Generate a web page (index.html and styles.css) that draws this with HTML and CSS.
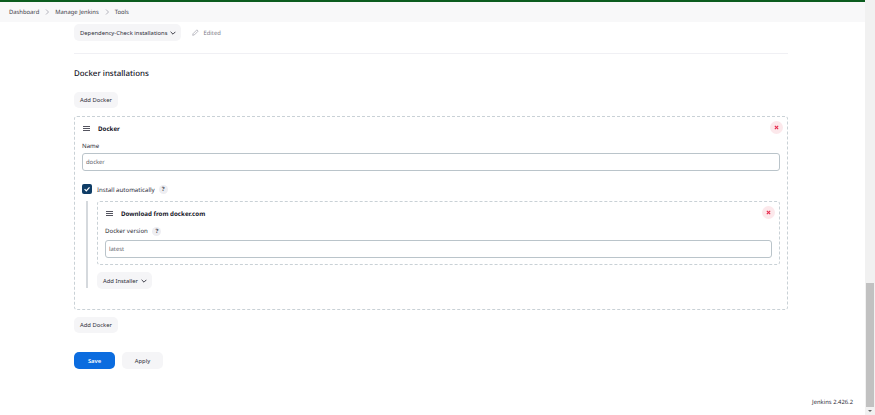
FILE: index.html
```html
<!DOCTYPE html>
<html lang="en">
<head>
  <meta charset="UTF-8">
  <title>Tools - Jenkins</title>
  <link rel="stylesheet" href="styles.css">
</head>
<body>
  <div class="page">
    <div class="top-line"></div>
    <nav class="breadcrumbs">
      <a>Dashboard</a>
      <svg class="sep" viewBox="0 0 4 6"><path d="M1 .5L3.5 3 1 5.5" /></svg>
      <a>Manage Jenkins</a>
      <svg class="sep" viewBox="0 0 4 6"><path d="M1 .5L3.5 3 1 5.5" /></svg>
      <a>Tools</a>
    </nav>

    <main class="content">
      <div class="dep-row">
        <button class="btn">Dependency-Check installations
          <svg class="chevron" viewBox="0 0 10 6"><path d="M1 1l4 4 4-4" /></svg>
        </button>
        <span class="edited">
          <svg class="pencil" viewBox="0 0 10 10"><path d="M1 9l.6-2.4L7 1.2 8.8 3 3.4 8.4z" /></svg>
          Edited
        </span>
      </div>

      <hr class="divider">

      <h2 class="section-title">Docker installations</h2>
      <button class="btn add-top">Add Docker</button>

      <section class="chunk outer">
        <button class="close outer-close">
          <svg viewBox="0 0 6 6"><path d="M1 1l4 4M5 1L1 5" /></svg>
        </button>
        <div class="chunk-head">
          <span class="handle"></span>
          <span class="chunk-title">Docker</span>
        </div>
        <label class="field-label">Name</label>
        <div class="input">docker</div>

        <div class="check-row">
          <span class="checkbox">
            <svg viewBox="0 0 10 10"><path d="M2.6 5.2l1.7 1.7 3.2-3.6" /></svg>
          </span>
          <span>Install automatically</span>
          <span class="help">?</span>
        </div>

        <div class="nested">
          <section class="chunk inner">
            <button class="close inner-close">
              <svg viewBox="0 0 6 6"><path d="M1 1l4 4M5 1L1 5" /></svg>
            </button>
            <div class="chunk-head">
              <span class="handle"></span>
              <span class="chunk-title">Download from docker.com</span>
            </div>
            <div class="field-label version-label">Docker version <span class="help">?</span></div>
            <div class="input">latest</div>
          </section>
          <button class="btn add-installer">Add Installer
            <svg class="chevron" viewBox="0 0 10 6"><path d="M1 1l4 4 4-4" /></svg>
          </button>
        </div>
      </section>

      <button class="btn add-bottom">Add Docker</button>

      <div class="actions">
        <button class="btn save">Save</button>
        <button class="btn apply">Apply</button>
      </div>
    </main>

    <footer class="footer">Jenkins 2.426.2</footer>
  </div>

  <div class="scrollbar">
    <div class="track"></div>
    <div class="thumb"></div>
    <div class="arrow"></div>
  </div>
</body>
</html>
```

FILE: styles.css
```css
* {
  box-sizing: border-box;
}

html, body {
  height: 415px;
  overflow: hidden;
}

body {
  margin: 0;
  display: flex;
  font-family: 'Noto Sans', 'Liberation Sans', sans-serif;
  font-size: 5.85px;
  text-rendering: geometricPrecision;
  color: #14141f;
  background: #fff;
}

.page {
  width: 865px;
  height: 415px;
  display: flex;
  flex-direction: column;
}

.top-line {
  height: 2px;
  background: #0b5c1e;
}

.breadcrumbs {
  height: 20px;
  padding: 0 0 1px 9px;
  display: flex;
  align-items: center;
  background: #f8f8f9;
  color: #3a3a46;
}

.sep {
  width: 4px;
  height: 6px;
  margin: 0 6px;
  fill: none;
  stroke: #9a9aa5;
  stroke-width: .7;
}

.content {
  padding: 2px 77px 0 74px;
  display: flex;
  flex-direction: column;
  align-items: flex-start;
}

.btn {
  height: 17px;
  padding: 0 6px 0 6px;
  border: none;
  border-radius: 5px;
  background: #f5f5f7;
  color: #2c2c38;
  font: inherit;
  display: inline-flex;
  align-items: center;
}

.chevron {
  width: 6px;
  height: 4px;
  margin-left: 3px;
  margin-right: -1px;
  fill: none;
  stroke: #2c2c38;
  stroke-width: 1.5;
}

.dep-row {
  display: flex;
  align-items: center;
}

.edited {
  margin-left: 11px;
  display: flex;
  align-items: center;
  gap: 4px;
  color: #7c7c88;
}

.pencil {
  width: 7px;
  height: 7px;
  fill: none;
  stroke: #8a8a96;
  stroke-width: .8;
}

.divider {
  width: 100%;
  height: 1px;
  margin: 12px 0 0;
  border: none;
  background: #f0f0f4;
}

.section-title {
  margin: 14px 0 0;
  font-size: 7.9px;
  line-height: 12px;
  font-weight: 500;
}

.add-top {
  margin-top: 12px;
  height: 16px;
}

.chunk {
  position: relative;
  border: 1px dashed #c9d1d6;
  border-radius: 3px;
  width: 100%;
}

.outer {
  height: 194px;
  margin-top: 8px;
  padding: 7px 7px 0 7px;
}

.close {
  position: absolute;
  width: 13px;
  height: 13px;
  padding: 0;
  border: none;
  border-radius: 50%;
  background: #fce8eb;
  display: flex;
  align-items: center;
  justify-content: center;
}

.close svg {
  width: 5px;
  height: 5px;
  fill: none;
  stroke: #e6294b;
  stroke-width: 1.3;
}

.outer-close {
  top: 4px;
  right: 4px;
}

.inner-close {
  top: 4px;
  right: 4px;
}

.chunk-head {
  display: flex;
  align-items: center;
  height: 9px;
  padding-left: 1px;
}

.handle {
  width: 7px;
  height: 5px;
  margin-right: 8px;
  border-top: 1px solid #555560;
  border-bottom: 1px solid #555560;
  background: linear-gradient(#555560, #555560) center / 100% 1px no-repeat;
}

.chunk-title {
  font-size: 6.2px;
  font-weight: 700;
}

.field-label {
  display: block;
  margin-top: 8px;
  font-size: 6.1px;
  line-height: 9px;
  color: #2c2c38;
}

.input {
  height: 18px;
  margin-top: 3px;
  padding: 0 3px;
  border: 1px solid #bac4ca;
  border-radius: 3px;
  line-height: 16px;
  color: #5c5c68;
}

.check-row {
  display: flex;
  align-items: center;
  height: 10px;
  margin-top: 13px;
  font-size: 6.1px;
  color: #2c2c38;
}

.checkbox {
  width: 10px;
  height: 10px;
  margin-right: 5px;
  border-radius: 2px;
  background: #0f3d66;
}

.checkbox svg {
  display: block;
  fill: none;
  stroke: #fff;
  stroke-width: 1.2;
}

.help {
  display: inline-flex;
  align-items: center;
  justify-content: center;
  width: 9px;
  height: 9px;
  margin-left: 4px;
  border-radius: 50%;
  background: #eeeef2;
  font-size: 6px;
  font-weight: 700;
  color: #44444f;
}

.nested {
  margin: 7px 0 0 4px;
  padding-left: 9px;
  border-left: 2px solid #d5d9dd;
  height: 87px;
}

.inner {
  height: 64px;
  padding: 7px 7px 0 7px;
}

.version-label {
  margin-top: 8px;
}

.version-label .help {
  margin-left: 3px;
}

.inner .input {
  margin-top: 4px;
}

.add-installer {
  margin-top: 7px;
}

.add-bottom {
  margin-top: 7px;
  height: 16px;
}

.actions {
  margin-top: 19px;
  display: flex;
  gap: 7px;
}

.save {
  width: 41px;
  justify-content: center;
  background: #0b6cdf;
  color: #fff;
  font-weight: 600;
}

.apply {
  width: 41px;
  justify-content: center;
}

.footer {
  margin-top: auto;
  padding: 0 12px 8px 0;
  text-align: right;
  line-height: 9px;
  color: #2c2c38;
}

.scrollbar {
  width: 10px;
  height: 415px;
  background: #f1f1f1;
  display: flex;
  flex-direction: column;
}

.track {
  height: 283px;
}

.thumb {
  height: 124px;
  margin: 0 1px;
  background: #c1c1c1;
}

.arrow {
  width: 0;
  height: 0;
  margin: 3px auto 0;
  border: 2px solid transparent;
  border-top: 2px solid #666;
  border-bottom: none;
}
```
